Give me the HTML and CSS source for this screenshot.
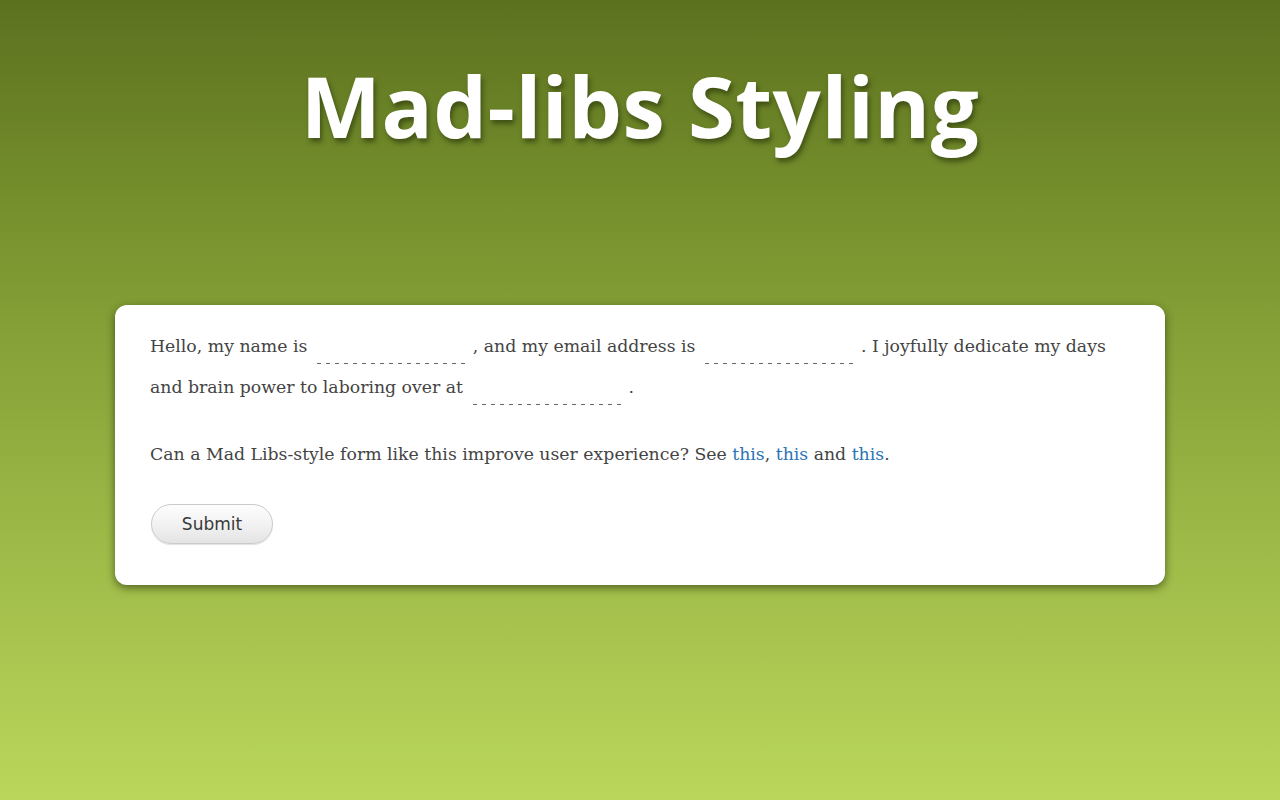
FILE: index.html
```html
<!DOCTYPE html>
<html lang="en">
<head>
<meta charset="utf-8">
<title>Mad-libs Styling</title>
<link rel="stylesheet" href="styles.css">
</head>
<body>
<header class="masthead">
  <h1 class="title">Mad-libs Styling</h1>
</header>
<main class="card">
  <form class="madlib">
    <p class="story">Hello, my name is <input class="blank" type="text" aria-label="name">, and my email address is <input class="blank" type="text" aria-label="email">. I joyfully dedicate my days and brain power to laboring over at <input class="blank" type="text" aria-label="company">.</p>
    <p class="note">Can a Mad Libs-style form like this improve user experience? See <a href="#">this</a>, <a href="#">this</a> and <a href="#">this</a>.</p>
    <button class="submit" type="button">Submit</button>
  </form>
</main>
</body>
</html>
```
FILE: styles.css
```css
html, body {
  margin: 0;
  padding: 0;
  height: 100%;
}
body {
  background: linear-gradient(to bottom, #5c711f 0%, #7a952f 30%, #9bb746 65%, #bad75b 100%);
  font-family: "DejaVu Serif", "Liberation Serif", serif;
  overflow: hidden;
}
.masthead {
  display: flex;
  justify-content: center;
  padding-top: 63px;
  height: 305px;
  box-sizing: border-box;
}
.title {
  margin: 0;
  font-family: "Open Sans", "Noto Sans", sans-serif;
  font-weight: 700;
  font-size: 85px;
  line-height: 1;
  letter-spacing: 0.5px;
  color: #fff;
  text-shadow: 2px 4px 5px rgba(30, 40, 5, 0.55);
}
.card {
  margin: 0 115px;
  background: #fff;
  border-radius: 12px;
  box-shadow: 0 3px 8px rgba(30, 40, 5, 0.6);
  padding: 21px 35px 41px;
}
.madlib p {
  margin: 0;
  font-size: 17.3px;
  color: #444;
}
.story {
  line-height: 41px;
}
.madlib .note {
  margin-top: 33px;
  line-height: 26px;
}
.note a {
  color: #2a74b4;
  text-decoration: none;
}
.blank {
  width: 152px;
  height: 34px;
  margin: 0 4px 0 4px;
  padding: 0;
  border: 0;
  background: repeating-linear-gradient(to right, #666 0 4px, transparent 4px 9px) left bottom / 100% 1px no-repeat;
  font: inherit;
  vertical-align: baseline;
  outline: none;
}
.submit {
  display: block;
  margin-top: 37px;
  margin-left: 1px;
  width: 122px;
  height: 40px;
  border: 1px solid #cbcbcb;
  border-radius: 20px;
  background: linear-gradient(to bottom, #fdfdfd 0%, #f2f2f2 50%, #e4e4e4 100%);
  box-shadow: 0 1px 1px rgba(0, 0, 0, 0.12);
  font-family: "DejaVu Sans", "Noto Sans", sans-serif;
  font-size: 17px;
  color: #3a3a3a;
  padding: 0;
}
```
